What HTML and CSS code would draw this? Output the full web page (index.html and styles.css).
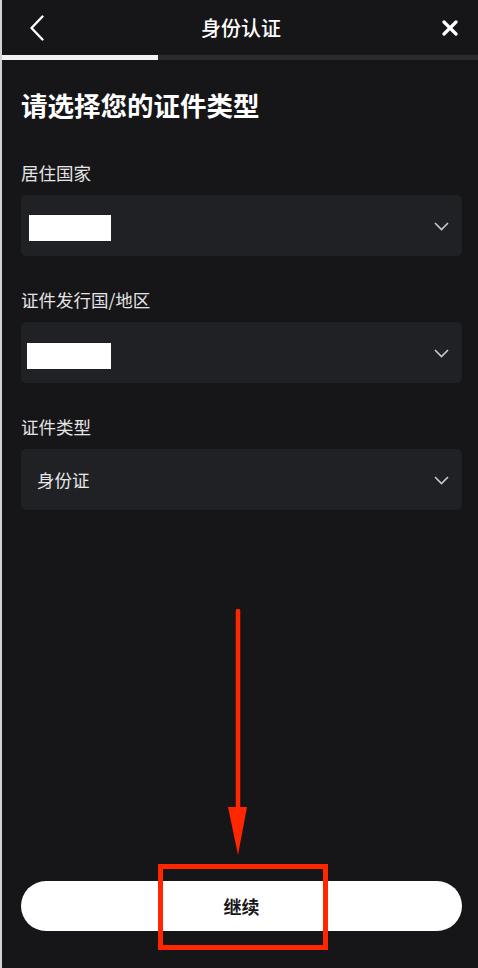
FILE: index.html
```html
<!DOCTYPE html>
<html lang="zh-CN">
<head>
    <meta charset="UTF-8">
    <title>身份认证</title>
    <link rel="stylesheet" href="styles.css">
</head>
<body>
<div class="page">
    <div class="head">
        <a href="javascript:;" class="back">
            <svg width="14" height="26" viewBox="0 0 14 26"><path d="M12.5 1.5 1.5 13l11 11.5" fill="none" stroke="#fff" stroke-width="2.4" stroke-linecap="round" stroke-linejoin="round"/></svg>
        </a>
        <p class="title">身份认证</p>
        <a href="javascript:;" class="close">
            <svg width="16" height="16" viewBox="0 0 16 16"><path d="M2 2 14 14M14 2 2 14" fill="none" stroke="#fff" stroke-width="3.2" stroke-linecap="round"/></svg>
        </a>
    </div>
    <div class="jd_box"><div class="jd_bg"></div></div>

    <div class="content">
        <h1 class="h1">请选择您的证件类型</h1>

        <div class="field">
            <p class="label">居住国家</p>
            <div class="select">
                <span class="mask mask1"></span>
                <svg class="arrow" width="15" height="9" viewBox="0 0 15 9"><path d="M1 1l6.5 6.5L14 1" fill="none" stroke="#c9c9cc" stroke-width="1.6"/></svg>
            </div>
        </div>

        <div class="field">
            <p class="label">证件发行国/地区</p>
            <div class="select">
                <span class="mask mask2"></span>
                <svg class="arrow" width="15" height="9" viewBox="0 0 15 9"><path d="M1 1l6.5 6.5L14 1" fill="none" stroke="#c9c9cc" stroke-width="1.6"/></svg>
            </div>
        </div>

        <div class="field">
            <p class="label">证件类型</p>
            <div class="select">
                <span class="val">身份证</span>
                <svg class="arrow" width="15" height="9" viewBox="0 0 15 9"><path d="M1 1l6.5 6.5L14 1" fill="none" stroke="#c9c9cc" stroke-width="1.6"/></svg>
            </div>
        </div>
    </div>

    <div class="footer">
        <a href="javascript:;" class="btn">继续</a>
    </div>

    <!-- 标注：箭头和红框 -->
    <svg class="mark_arrow" width="24" height="250" viewBox="0 0 24 250"><path d="M12 2V200" stroke="#ff2600" stroke-width="4.5" stroke-linecap="round"/><path d="M2 198H21L12 246Z" fill="#ff2600"/></svg>
    <div class="mark_box"></div>
</div>
</body>
</html>
```

FILE: styles.css
```css
*{margin: 0;padding: 0;box-sizing: border-box;}
body{background: #161618;font-family: "Noto Sans CJK SC", "Noto Sans", sans-serif;color: #fff;}
a{text-decoration: none;}
.page{position: relative;height: 968px;border-left: 2px solid #d4d4d6;display: flex;flex-direction: column;}
.head{height: 55px;display: grid;grid-template-columns: 1fr auto 1fr;align-items: center;padding: 0 20px 0 28px;}
.head .back,.head .close{display: flex;}
.head .back{padding-top: 1px;}
.head .close{justify-self: end;}
.head .title{font-size: 20px;font-weight: 500;line-height: 24px;margin-left: -6px;}
.jd_box{height: 5px;background: #2b2b2e;}
.jd_box .jd_bg{width: 156px;height: 5px;background: #f2f2f2;}
.content{padding: 27px 16px 0 19px;}
.h1{font-size: 26.5px;font-weight: 700;line-height: 36px;margin-bottom: 38px;}
.field{margin-bottom: 32px;}
.label{font-size: 17.5px;line-height: 24px;color: #e4e4e6;margin-bottom: 10px;}
.select{height: 61px;background: #202125;border-radius: 5px;display: flex;align-items: center;justify-content: space-between;padding: 0 13px 0 16px;}
.select .val{font-size: 17.5px;color: #e8e8ea;}
.mask{display: block;background: #fff;height: 26px;}
.mask1{width: 82px;margin: 4px 0 0 -8px;}
.mask2{width: 84px;margin: 6px 0 0 -10px;}
.arrow{margin-top: 2px;}
.footer{margin-top: auto;padding: 0 16px 37px 19px;}
.btn{display: block;height: 50px;border-radius: 25px;background: #fff;color: #161618;font-size: 18px;font-weight: 700;line-height: 50px;text-align: center;}
.mark_arrow{position: absolute;left: 224px;top: 609px;}
.mark_box{position: absolute;left: 156px;top: 864px;width: 170px;height: 86px;border: 5px solid #ff2600;}
```
